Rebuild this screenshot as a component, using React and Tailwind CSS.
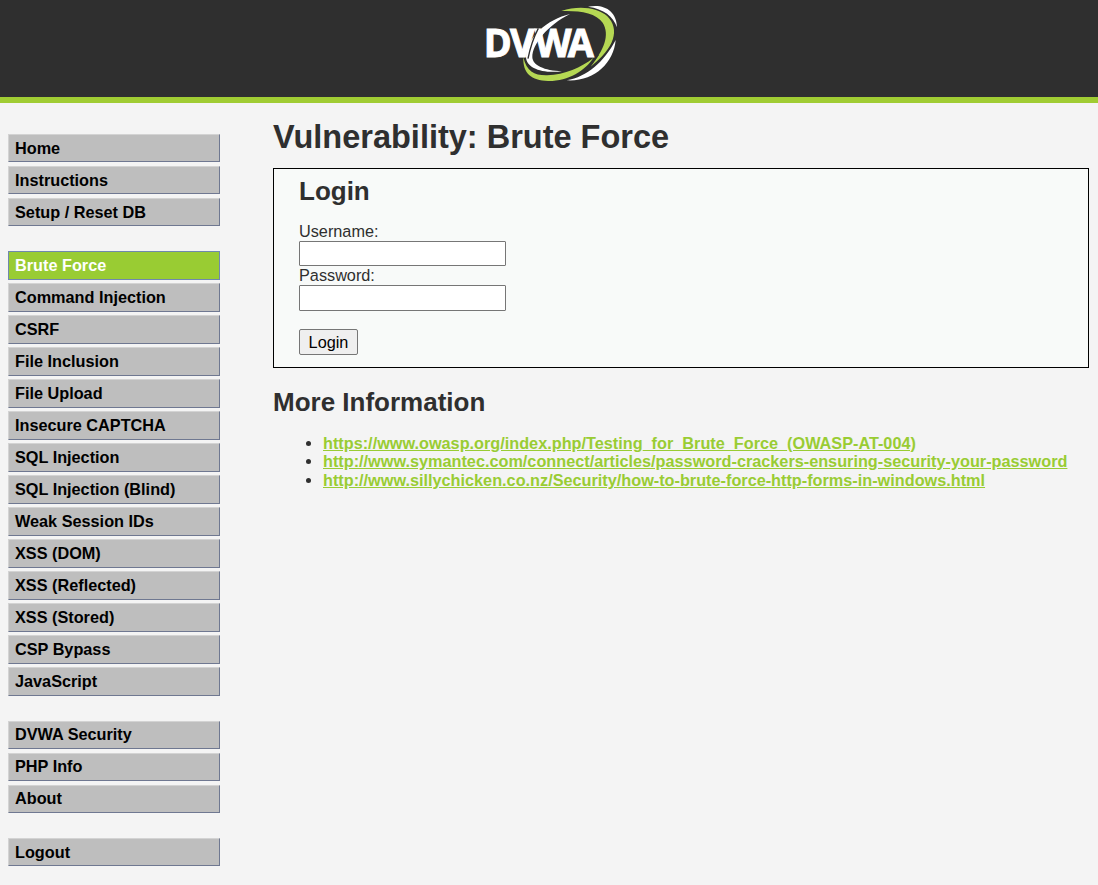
const groups = [
  { box: "h-7 mb-1 leading-[27px]", items: ["Home", "Instructions", "Setup / Reset DB"] },
  {
    box: "h-[29px] mb-[3px] leading-[27px]",
    items: [
      "Brute Force",
      "Command Injection",
      "CSRF",
      "File Inclusion",
      "File Upload",
      "Insecure CAPTCHA",
      "SQL Injection",
      "SQL Injection (Blind)",
      "Weak Session IDs",
      "XSS (DOM)",
      "XSS (Reflected)",
      "XSS (Stored)",
      "CSP Bypass",
      "JavaScript",
    ],
  },
  { box: "h-7 mb-1 leading-[25px]", items: ["DVWA Security", "PHP Info", "About"] },
  { box: "h-7 leading-[27px]", items: ["Logout"] },
];

const links = [
  ["https://www.owasp.org/index.php/Testing_for_Brute_Force_(OWASP-AT-004)", "h-[18px]"],
  ["http://www.symantec.com/connect/articles/password-crackers-ensuring-security-your-password", "h-[18px]"],
  ["http://www.sillychicken.co.nz/Security/how-to-brute-force-http-forms-in-windows.html", "h-[20px]"],
];

function Logo() {
  return (
    <svg width="160" height="97" viewBox="0 0 480 291" aria-label="DVWA">
      <path fill="#fff" d="M300 42C232 58 170 112 168 170C168 204 216 221 276 214C222 212 188 196 187 172C187 132 232 76 300 42Z" />
      <path fill="#b5d853" d="M160 172C170 215 194 227 232 226C284 224 334 202 370 174C346 212 294 244 234 243C184 242 158 220 160 172Z" />
      <path fill="#b5d853" d="M274 33C330 15 384 24 412 49C450 88 435 143 362 200C401 150 421 105 398 68C378 38 326 31 274 33Z" />
      <path fill="#fff" d="M354 20C402 10 440 32 441 82C430 49 402 27 354 20Z" />
      <path fill="#fff" d="M437 120C431 190 372 246 290 241C352 230 402 186 437 120Z" />
      <path stroke="#2f2f2f" strokeWidth="2" fill="none" d="M355 200Q375 184 386 165" />
      <text
        transform="scale(0.955 1)" x="43 126 204 307" y="172" fontFamily="Open Sans"
        fontWeight="700" fontSize="119" fill="#fff" stroke="#fff" strokeWidth="3"
      >DVWA</text>
      <path stroke="#2f2f2f" strokeWidth="4" fill="none" d="M205 85Q184 125 174 176" />
    </svg>
  );
}

export default function App() {
  return (
    <div className="min-h-[885px] bg-[#f4f4f4] font-['Liberation_Sans',Arial,sans-serif] text-[#2f2f2f]">
      <header className="h-[103px] border-b-[6px] border-[#a0cc33] bg-[#2f2f2f] pl-[470px]">
        <Logo />
      </header>
      <div className="flex">
        <nav className="w-[273px] shrink-0 pl-2 pt-[31px]">
          {groups.map((g, i) => (
            <ul key={i} className="mb-[25px] w-[212px] last:mb-0">
              {g.items.map((name) => (
                <li
                  key={name}
                  className={`${g.box} border pl-1.5 text-[16.25px] font-bold whitespace-nowrap ${
                    name === "Brute Force"
                      ? "border-[#7088ae] bg-[#99cc33] text-white"
                      : "border-t-[#d3d3d3] border-r-[#6f7891] border-b-[#6f7891] border-l-[#d3d3d3] bg-[#bebebe] text-black"
                  }`}
                >
                  {name}
                </li>
              ))}
            </ul>
          ))}
        </nav>
        <main className="w-[816px]">
          <h1 className="mt-[15px] text-[32.5px] leading-[38px] font-bold whitespace-nowrap">Vulnerability: Brute Force</h1>
          <section className="mt-[12px] h-[200px] border border-black bg-[#f8faf9] pl-[25px]">
            <h2 className="pt-[7px] text-[26px] leading-[30px] font-bold">Login</h2>
            <form className="mt-4 flex flex-col items-start text-[16.25px] leading-[19px]">
              <label>Username:</label>
              <input className="h-[25px] w-[207px] rounded-[1px] border border-[#767676] bg-white" />
              <label>Password:</label>
              <input type="password" className="h-[26px] w-[207px] rounded-[1px] border border-[#767676] bg-white" />
              <button type="button" className="mt-[18px] h-[26px] w-[59px] rounded-[2px] border border-[#767676] bg-[#efefef] text-black">Login</button>
            </form>
          </section>
          <h2 className="mt-[19px] text-[26px] leading-[30px] font-bold">More Information</h2>
          <ul className="mt-[17px] pl-[33px]">
            {links.map(([url, height]) => (
              <li key={url} className={`flex items-center ${height}`}>
                <i className="mr-3 size-[5px] shrink-0 rounded-full bg-[#2f2f2f]" />
                <a href="#" className="text-[16.25px] leading-[18px] font-bold whitespace-nowrap text-[#99cc33] underline">{url}</a>
              </li>
            ))}
          </ul>
        </main>
      </div>
    </div>
  );
}
